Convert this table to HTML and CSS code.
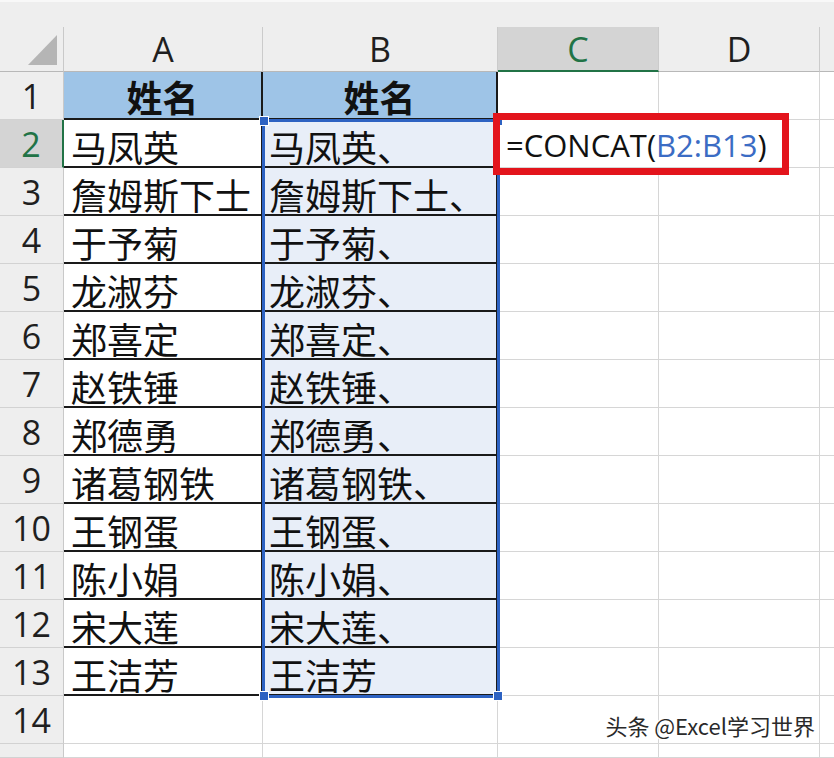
FILE: index.html
```html
<!DOCTYPE html>
<html lang="zh-CN">
<head>
<meta charset="utf-8">
<title>CONCAT</title>
<link rel="stylesheet" href="styles.css">
</head>
<body>
<div class="stack">
<div class="sheet">
  <div class="topband"></div>

  <div class="corner"><span class="tri"></span></div>
  <div class="colhead">A</div>
  <div class="colhead">B</div>
  <div class="colhead sel">C</div>
  <div class="colhead">D</div>
  <div class="colhead edge"></div>

  <div class="rowhead">1</div>
  <div class="cell title">姓名</div>
  <div class="cell title">姓名</div>
  <div class="cell"></div>
  <div class="cell"></div>
  <div class="cell edge"></div>

  <div class="rowhead sel">2</div>
  <div class="cell name">马凤英</div>
  <div class="cell name tint">马凤英、</div>
  <div class="cell formula">=CONCAT(<span class="ref">B2:B13</span>)</div>
  <div class="cell"></div>
  <div class="cell edge"></div>

  <div class="rowhead">3</div>
  <div class="cell name">詹姆斯下士</div>
  <div class="cell name tint">詹姆斯下士、</div>
  <div class="cell"></div>
  <div class="cell"></div>
  <div class="cell edge"></div>

  <div class="rowhead">4</div>
  <div class="cell name">于予菊</div>
  <div class="cell name tint">于予菊、</div>
  <div class="cell"></div>
  <div class="cell"></div>
  <div class="cell edge"></div>

  <div class="rowhead">5</div>
  <div class="cell name">龙淑芬</div>
  <div class="cell name tint">龙淑芬、</div>
  <div class="cell"></div>
  <div class="cell"></div>
  <div class="cell edge"></div>

  <div class="rowhead">6</div>
  <div class="cell name">郑喜定</div>
  <div class="cell name tint">郑喜定、</div>
  <div class="cell"></div>
  <div class="cell"></div>
  <div class="cell edge"></div>

  <div class="rowhead">7</div>
  <div class="cell name">赵铁锤</div>
  <div class="cell name tint">赵铁锤、</div>
  <div class="cell"></div>
  <div class="cell"></div>
  <div class="cell edge"></div>

  <div class="rowhead">8</div>
  <div class="cell name">郑德勇</div>
  <div class="cell name tint">郑德勇、</div>
  <div class="cell"></div>
  <div class="cell"></div>
  <div class="cell edge"></div>

  <div class="rowhead">9</div>
  <div class="cell name">诸葛钢铁</div>
  <div class="cell name tint">诸葛钢铁、</div>
  <div class="cell"></div>
  <div class="cell"></div>
  <div class="cell edge"></div>

  <div class="rowhead">10</div>
  <div class="cell name">王钢蛋</div>
  <div class="cell name tint">王钢蛋、</div>
  <div class="cell"></div>
  <div class="cell"></div>
  <div class="cell edge"></div>

  <div class="rowhead">11</div>
  <div class="cell name">陈小娟</div>
  <div class="cell name tint">陈小娟、</div>
  <div class="cell"></div>
  <div class="cell"></div>
  <div class="cell edge"></div>

  <div class="rowhead">12</div>
  <div class="cell name">宋大莲</div>
  <div class="cell name tint">宋大莲、</div>
  <div class="cell"></div>
  <div class="cell"></div>
  <div class="cell edge"></div>

  <div class="rowhead">13</div>
  <div class="cell name">王洁芳</div>
  <div class="cell name tint">王洁芳</div>
  <div class="cell"></div>
  <div class="cell"></div>
  <div class="cell edge"></div>

  <div class="rowhead">14</div>
  <div class="cell"></div>
  <div class="cell"></div>
  <div class="cell"></div>
  <div class="cell"></div>
  <div class="cell edge"></div>

  <div class="rowhead"></div>
  <div class="cell"></div>
  <div class="cell"></div>
  <div class="cell"></div>
  <div class="cell"></div>
  <div class="cell edge"></div>
</div>

<div class="overlay">
  <div class="selection">
    <i class="handle tl"></i>
    <i class="handle tr"></i>
    <i class="handle bl"></i>
    <i class="handle br"></i>
  </div>
  <div class="callout"></div>
</div>
</div>
<div class="watermark">头条 @Excel学习世界</div>
</body>
</html>
```

FILE: styles.css
```css
html, body {
  margin: 0;
  padding: 0;
  background: #ffffff;
}

body {
  width: 834px;
  height: 758px;
  overflow: hidden;
  position: relative;
  font-family: "Open Sans", "Noto Sans", sans-serif;
}

.stack {
  display: grid;
}

.sheet,
.overlay {
  grid-area: 1 / 1;
  display: grid;
  grid-template-columns: 64px 199px 235px 161px 161px 14px;
  grid-template-rows: 27px 45px repeat(14, 48px) 14px;
}

.sheet {
  background: #ffffff;
}

.overlay {
  pointer-events: none;
  z-index: 2;
}

.topband {
  grid-column: 1 / -1;
  background: #eeeeee;
  border-top: 2px solid #f8f8f8;
  box-sizing: border-box;
}

.corner {
  background: #eeeeee;
  border-right: 1px solid #c9c9c9;
  border-bottom: 1px solid #b8b8b8;
  box-sizing: border-box;
  position: relative;
}

.tri {
  position: absolute;
  left: 28px;
  top: 8px;
  width: 0;
  height: 0;
  border-left: 29px solid transparent;
  border-bottom: 30px solid #b5b5b5;
}

.colhead {
  background: #eeeeee;
  border-right: 1px solid #cbcbcb;
  border-bottom: 1px solid #b8b8b8;
  box-sizing: border-box;
  display: flex;
  align-items: center;
  justify-content: center;
  font-size: 34px;
  color: #1f1f1f;
}

.colhead.sel {
  background: #d4d4d4;
  color: #217346;
  border-bottom: 2px solid #217346;
}

.colhead.edge {
  border-right: none;
}

.rowhead {
  background: #eeeeee;
  border-right: 1px solid #c9c9c9;
  border-bottom: 1px solid #d2d2d2;
  box-sizing: border-box;
  display: flex;
  align-items: center;
  justify-content: center;
  font-size: 34px;
  color: #1f1f1f;
}

.rowhead.sel {
  background: #d4d4d4;
  color: #217346;
  border-right: 2px solid #217346;
}

.cell {
  border-right: 1px solid #d6d6d6;
  border-bottom: 1px solid #d6d6d6;
  box-sizing: border-box;
  display: flex;
  align-items: center;
  white-space: nowrap;
  font-family: "Noto Sans CJK SC", sans-serif;
  font-size: 36px;
  color: #111111;
  min-width: 0;
}

.cell.edge {
  border-right: none;
}

.cell.title {
  background: #9ec4e7;
  border-right: 2px solid #1a1a1a;
  border-bottom: 2px solid #1a1a1a;
  justify-content: center;
  font-weight: 700;
  padding-top: 1px;
}

.cell.name {
  border-right: 2px solid #1a1a1a;
  border-bottom: 2px solid #1a1a1a;
  padding-left: 7px;
  padding-top: 6px;
}

.cell.tint {
  background: #e8eef8;
  padding-left: 6px;
}

.cell.formula {
  border-right: none;
  overflow: visible;
  padding-left: 8px;
  padding-top: 3px;
  font-family: "Open Sans", "Noto Sans", sans-serif;
  font-size: 31px;
  color: #111111;
  position: relative;
  z-index: 1;
}

.ref {
  color: #3b6cc4;
}

.selection {
  grid-column: 3;
  grid-row: 4 / 16;
  margin: -1px -2px -2px -1px;
  border: 3px solid #2d62c2;
  box-sizing: border-box;
  position: relative;
}

.handle {
  position: absolute;
  width: 8px;
  height: 8px;
  background: #2d62c2;
  border: 1px solid #ffffff;
}

.handle.tl { left: -6px; top: -6px; }
.handle.tr { right: -6px; top: -6px; }
.handle.bl { left: -6px; bottom: -6px; }
.handle.br { right: -6px; bottom: -6px; }

.callout {
  grid-column: 4 / 6;
  grid-row: 4;
  margin: -7px 31px -7px -5px;
  border: 7px solid #e3141c;
  box-sizing: border-box;
  position: relative;
  z-index: 1;
}

.watermark {
  position: absolute;
  right: 19px;
  bottom: 17px;
  font-family: "Noto Sans CJK SC", sans-serif;
  font-size: 22px;
  color: #2a2a2a;
  text-shadow: 1px 1px 0 #ffffff, -1px -1px 0 #ffffff, 1px -1px 0 #ffffff, -1px 1px 0 #ffffff;
  white-space: nowrap;
}
```
